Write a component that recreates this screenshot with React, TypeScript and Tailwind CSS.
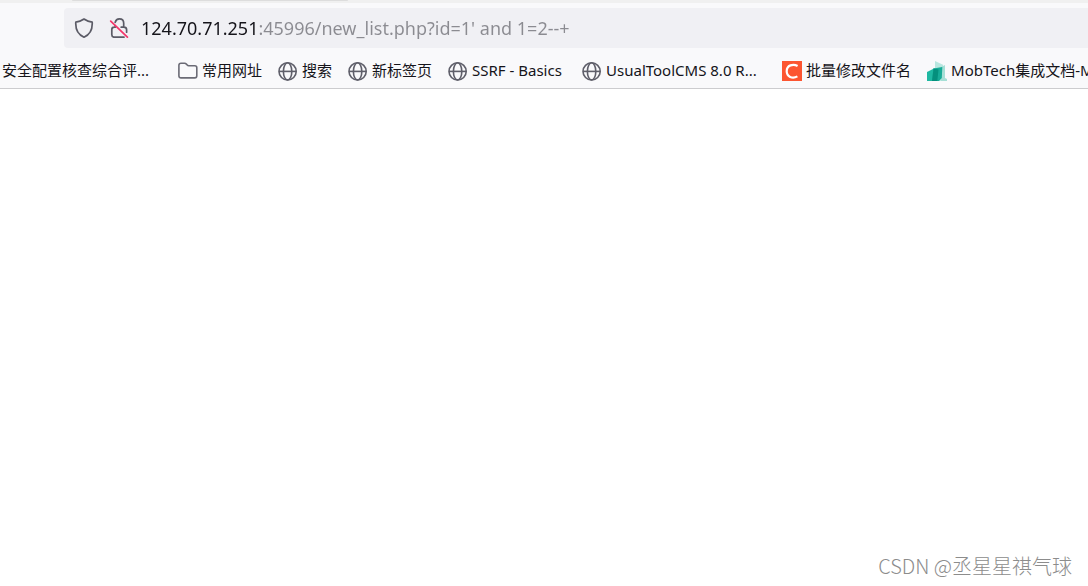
import type { ReactNode } from "react";

const ADDRESS = "124.70.71.251:45996/new_list.php?id=1' and 1=2--+";

function ShieldIcon() {
  return (
    <svg viewBox="0 0 20 20" className="size-5 shrink-0" fill="none" stroke="#5b5b66" strokeWidth="1.7" strokeLinejoin="round" aria-hidden="true">
      <path d="M10 1 C12.5 2.7 15.5 3.8 18.2 4.2 C18.6 10.5 16.4 16.4 10 19.2 C3.6 16.4 1.4 10.5 1.8 4.2 C4.5 3.8 7.5 2.7 10 1 Z" />
    </svg>
  );
}

function InsecureLockIcon() {
  return (
    <svg viewBox="0 0 20 20" className="size-5 shrink-0" fill="none" strokeLinecap="round" strokeLinejoin="round" aria-hidden="true">
      <path d="M6.2 4.3 C6.8 2 8.4 0.9 10.3 0.9 C12.9 0.9 14.7 2.7 14.7 5.2 V9.2 H12.2 M14.7 9.2 C16.7 9.2 17.6 10 17.6 11.7 V14.2 M6.2 7.6 V9.2 H5.4 C3.7 9.2 2.8 10 2.8 11.6 V16.8 C2.8 18.4 3.6 19.2 5.2 19.2 H15" stroke="#5b5b66" strokeWidth="1.7" />
      <path d="M1.7 3.1 L18.4 19.2" stroke="#f4366a" strokeWidth="1.7" />
    </svg>
  );
}

function FolderIcon() {
  return (
    <svg viewBox="0 0 20 20" className="size-5 shrink-0" fill="none" stroke="#6b6b76" strokeWidth="1.6" strokeLinejoin="round" aria-hidden="true">
      <path d="M3 2.2 H6.6 C7.3 2.2 7.8 2.4 8.2 2.9 L9.2 4 C9.6 4.5 10 4.7 10.7 4.7 H16.8 C18 4.7 18.8 5.5 18.8 6.7 V14.8 C18.8 16.2 18 16.9 16.8 16.9 H3 C1.7 16.9 0.9 16.2 0.9 14.8 V4.3 C0.9 3 1.7 2.2 3 2.2 Z" />
    </svg>
  );
}

function GlobeIcon() {
  return (
    <svg viewBox="0 0 20 20" className="size-5 shrink-0" fill="none" stroke="#5f5f6a" strokeWidth="1.6" aria-hidden="true">
      <circle cx="9.6" cy="10.4" r="8.6" />
      <ellipse cx="9.6" cy="10.4" rx="4.2" ry="8.6" />
      <path d="M1 10.4 H18.2" />
    </svg>
  );
}

function LetterCIcon() {
  return (
    <svg viewBox="0 0 20 20" className="size-5 shrink-0" fill="none" aria-hidden="true">
      <rect width="20" height="20" fill="#fc5531" />
      <path d="M15.6 5 C11 2.4 4.7 4.2 4.7 10.3 C4.7 15.8 10.4 18.1 15.4 15.4" stroke="#fff" strokeWidth="2.2" />
    </svg>
  );
}

function MobTechIcon() {
  return (
    <svg viewBox="0 0 20 20" className="size-5 shrink-0" aria-hidden="true">
      <path d="M8 0 L16 3.8 V20 H8 Z" fill="#b9e7e0" />
      <path d="M14 6 L18 4 V17 L20 18 V20 H14 Z" fill="#a5dfd6" />
      <path d="M0 11 L7.5 7.2 L6 20 H0 Z" fill="#1fb8a2" />
      <path d="M6.3 7.6 L15.3 6 L14.8 17 L12 20 H5 Z" fill="#17ab97" />
      <path d="M6.6 7.4 L11.5 8.5 L10.3 20 H5 Z" fill="#04907d" />
    </svg>
  );
}

function Bookmark({ icon, label, width = "" }: { icon: ReactNode; label: string; width?: string }) {
  return (
    <a href="#" className={`flex shrink-0 items-center gap-1 ${width}`}>
      {icon}
      <span className="pb-[2px]">{label}</span>
    </a>
  );
}

export default function App() {
  return (
    <div className="flex min-h-screen flex-col bg-white font-['Noto_Sans','Noto_Sans_CJK_SC',sans-serif] text-[#15141a]">
      <header className="overflow-hidden border-b border-[#cccccf] bg-[#f9f9fb]">
        <div className="h-[3px] bg-[#f0f0f0] pl-[72px]">
          <div className="h-px w-[276px] rounded-b bg-[#dddddd]" />
        </div>
        <div className="pt-[5px] pl-16">
          <div className="flex h-10 items-center rounded-l bg-[#f0f0f4] pl-[10px]">
            <button type="button" aria-label="Tracking protection" className="mr-[15px]">
              <ShieldIcon />
            </button>
            <button type="button" aria-label="Connection is not secure" className="mr-3">
              <InsecureLockIcon />
            </button>
            <input
              aria-label="Address"
              defaultValue={ADDRESS}
              spellCheck={false}
              className="h-8 min-w-0 flex-1 bg-[linear-gradient(to_right,#15141a_118px,#8b8b91_118px)] bg-clip-text text-[18px] outline-none [-webkit-text-fill-color:transparent]"
            />
          </div>
        </div>
        <nav aria-label="Bookmarks" className="flex h-10 items-center gap-4 pt-[6px] pl-[2px] text-[15px] leading-5 whitespace-nowrap">
          <a href="#" className="w-[160px] shrink-0 pb-[2px]">安全配置核查综合评...</a>
          <Bookmark icon={<FolderIcon />} label="常用网址" />
          <Bookmark icon={<GlobeIcon />} label="搜索" />
          <Bookmark icon={<GlobeIcon />} label="新标签页" />
          <Bookmark icon={<GlobeIcon />} label="SSRF - Basics" width="w-[118px]" />
          <Bookmark icon={<GlobeIcon />} label="UsualToolCMS 8.0 R..." width="w-[184px]" />
          <Bookmark icon={<LetterCIcon />} label="批量修改文件名" />
          <Bookmark icon={<MobTechIcon />} label="MobTech集成文档-M" />
        </nav>
      </header>
      <main className="flex flex-1 items-end justify-end px-4 pb-[6px]">
        <p className="font-['Noto_Sans_CJK_SC',sans-serif] text-[20px] leading-7 font-light text-[#8c8c8c]">CSDN @丞星星祺气球</p>
      </main>
    </div>
  );
}
